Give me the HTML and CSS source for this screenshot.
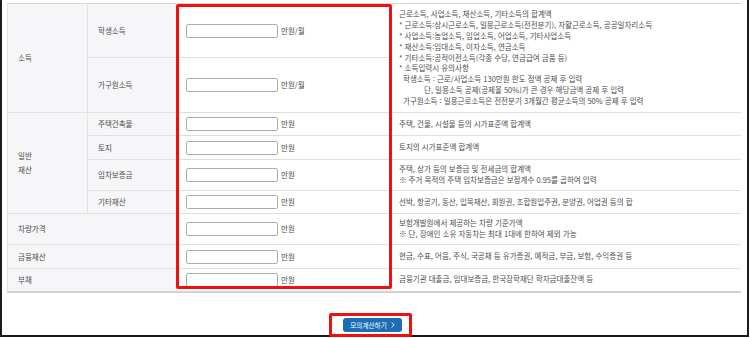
FILE: index.html
```html
<!DOCTYPE html>
<html lang="ko">
<head>
    <meta charset="UTF-8">
    <meta name="viewport" content="width=device-width, initial-scale=1.0">
    <title>모의계산하기</title>
    <link rel="stylesheet" href="styles.css">
</head>
<body>
    <div class="frame">
        <table class="calc-table">
            <colgroup>
                <col class="col-group">
                <col class="col-item">
                <col class="col-input">
                <col class="col-desc">
            </colgroup>
            <tbody>
                <tr class="row-income">
                    <th rowspan="2" class="group">소득</th>
                    <th class="item">학생소득</th>
                    <td class="input-cell"><div class="field"><input type="text"><span>만원/월</span></div></td>
                    <td rowspan="2" class="desc">
                        근로소득, 사업소득, 재산소득, 기타소득의 합계액<br>
                        * 근로소득:상시근로소득, 일용근로소득(전전분기), 자활근로소득, 공공일자리소득<br>
                        * 사업소득:농업소득, 임업소득, 어업소득, 기타사업소득<br>
                        * 재산소득:임대소득, 이자소득, 연금소득<br>
                        * 기타소득:공적이전소득(각종 수당, 연금급여 금품 등)<br>
                        * 소득입력시 유의사항<br>
                        <span class="indent">학생소득 : 근로/사업소득 130만원 한도 정액 공제 후 입력</span><br>
                        <span class="indent-deep">단, 일용소득 공제(공제율 50%)가 큰 경우 해당금액 공제 후 입력</span><br>
                        <span class="indent">가구원소득 : 일용근로소득은 전전분기 3개월간 평균소득의 50% 공제 후 입력</span>
                    </td>
                </tr>
                <tr class="row-income-2">
                    <th class="item">가구원소득</th>
                    <td class="input-cell"><div class="field"><input type="text"><span>만원/월</span></div></td>
                </tr>
                <tr class="row-s">
                    <th rowspan="4" class="group">일반<br>재산</th>
                    <th class="item">주택건축물</th>
                    <td class="input-cell"><div class="field"><input type="text"><span>만원</span></div></td>
                    <td class="desc">주택, 건물, 시설물 등의 시가표준액 합계액</td>
                </tr>
                <tr class="row-m">
                    <th class="item">토지</th>
                    <td class="input-cell"><div class="field"><input type="text"><span>만원</span></div></td>
                    <td class="desc">토지의 시가표준액 합계액</td>
                </tr>
                <tr class="row-l">
                    <th class="item">임차보증금</th>
                    <td class="input-cell"><div class="field"><input type="text"><span>만원</span></div></td>
                    <td class="desc">주택, 상가 등의 보증금 및 전세금의 합계액<br>※ 주거 목적의 주택 임차보증금은 보정계수 0.95를 곱하여 입력</td>
                </tr>
                <tr class="row-s">
                    <th class="item">기타재산</th>
                    <td class="input-cell"><div class="field"><input type="text"><span>만원</span></div></td>
                    <td class="desc">선박, 항공기, 동산, 입목재산, 회원권, 조합원입주권, 분양권, 어업권 등의 합</td>
                </tr>
                <tr class="row-l">
                    <th colspan="2" class="group">차량가격</th>
                    <td class="input-cell"><div class="field"><input type="text"><span>만원</span></div></td>
                    <td class="desc">보험개발원에서 제공하는 차량 기준가액<br>※ 단, 장애인 소유 자동차는 최대 1대에 한하여 제외 가능</td>
                </tr>
                <tr class="row-m">
                    <th colspan="2" class="group">금융재산</th>
                    <td class="input-cell"><div class="field"><input type="text"><span>만원</span></div></td>
                    <td class="desc">현금, 수표, 어음, 주식, 국공채 등 유가증권, 예적금, 부금, 보험, 수익증권 등</td>
                </tr>
                <tr class="row-s last">
                    <th colspan="2" class="group">부채</th>
                    <td class="input-cell"><div class="field"><input type="text"><span>만원</span></div></td>
                    <td class="desc">금융기관 대출금, 임대보증금, 한국장학재단 학자금대출잔액 등</td>
                </tr>
            </tbody>
        </table>

        <div class="btn-area">
            <div class="btn-mark">
                <button type="button" class="btn-calc">모의계산하기
                    <svg width="4" height="6" viewBox="0 0 4 6"><path d="M0.6 0.5 L3.2 3 L0.6 5.5" fill="none" stroke="#fff" stroke-width="0.9"/></svg>
                </button>
            </div>
        </div>

        <div class="highlight"></div>
    </div>
</body>
</html>
```

FILE: styles.css
```css
/* General */
body {
    margin: 0;
    padding: 0;
    background: #fff;
    font-family: "Noto Sans CJK KR", "Noto Sans", sans-serif;
    font-size: 7.5px;
    color: #4a4a4a;
}

/* Outer frame */
.frame {
    position: relative;
    box-sizing: border-box;
    width: 749px;
    height: 337px;
    border: 2px solid #1c1c1c;
    border-top: none;
    padding: 3px 7px 0 5px;
}

/* Table */
.calc-table {
    width: 733px;
    table-layout: fixed;
    border-collapse: collapse;
    border-top: 1px solid #d6d6d6;
    border-left: 1px solid #e2e2e2;
}

.col-group { width: 80px; }
.col-item { width: 89px; }
.col-input { width: 214px; }
.col-desc { width: 350px; }

.calc-table th,
.calc-table td {
    padding: 0;
    border-bottom: 1px solid #e0e0e0;
    vertical-align: middle;
    text-align: left;
    font-weight: normal;
}

.calc-table th {
    background: #f6f6f8;
    border-right: 1px solid #e4e4e4;
    line-height: 14px;
    color: #4a4a4a;
}

.calc-table th.group {
    padding-left: 10px;
}

.calc-table th.item {
    padding-left: 10px;
}

.calc-table tr.last th,
.calc-table tr.last td {
    border-bottom: 2px solid #d2d2d2;
}

.row-income { height: 54px; }
.row-income-2 { height: 55px; }
.row-s { height: 23px; }
.row-m { height: 24px; }
.row-l { height: 31px; }

/* Inputs */
.input-cell {
    padding-left: 9px !important;
    border-right: 1px solid #e0e0e0;
}

.field {
    display: flex;
    align-items: center;
    gap: 3px;
}

.field input {
    box-sizing: border-box;
    width: 92px;
    height: 14px;
    margin: 0;
    padding: 0 3px;
    border: 1px solid #ababab;
    border-radius: 2px;
    background: #fff;
    font-size: 7.5px;
}

.field span {
    line-height: 14px;
    color: #4a4a4a;
}

/* Description */
.desc {
    padding: 0 8px !important;
    line-height: 10.8px;
    color: #4d4d4d;
}

.desc .indent {
    padding-left: 4px;
}

.desc .indent-deep {
    padding-left: 25px;
}

/* Button */
.btn-area {
    display: flex;
    justify-content: center;
    margin-top: 20px;
}

.btn-mark {
    margin-right: 6px;
    padding: 2px 7px 2px 11px;
    border: 3px solid #f01010;
    border-radius: 2px;
}

.btn-calc {
    display: flex;
    align-items: center;
    gap: 4px;
    height: 14px;
    margin: 0;
    padding: 0 7px 0 7px;
    border: none;
    border-radius: 3px;
    background: #1d6db5;
    color: #fff;
    font-family: "Noto Sans CJK KR", "Noto Sans", sans-serif;
    font-size: 6.6px;
    cursor: pointer;
}

/* Red annotation box over input column */
.highlight {
    position: absolute;
    left: 174px;
    top: 4px;
    width: 216px;
    height: 285px;
    box-sizing: border-box;
    border: 3px solid #f01010;
    border-radius: 2px;
    pointer-events: none;
}
```
